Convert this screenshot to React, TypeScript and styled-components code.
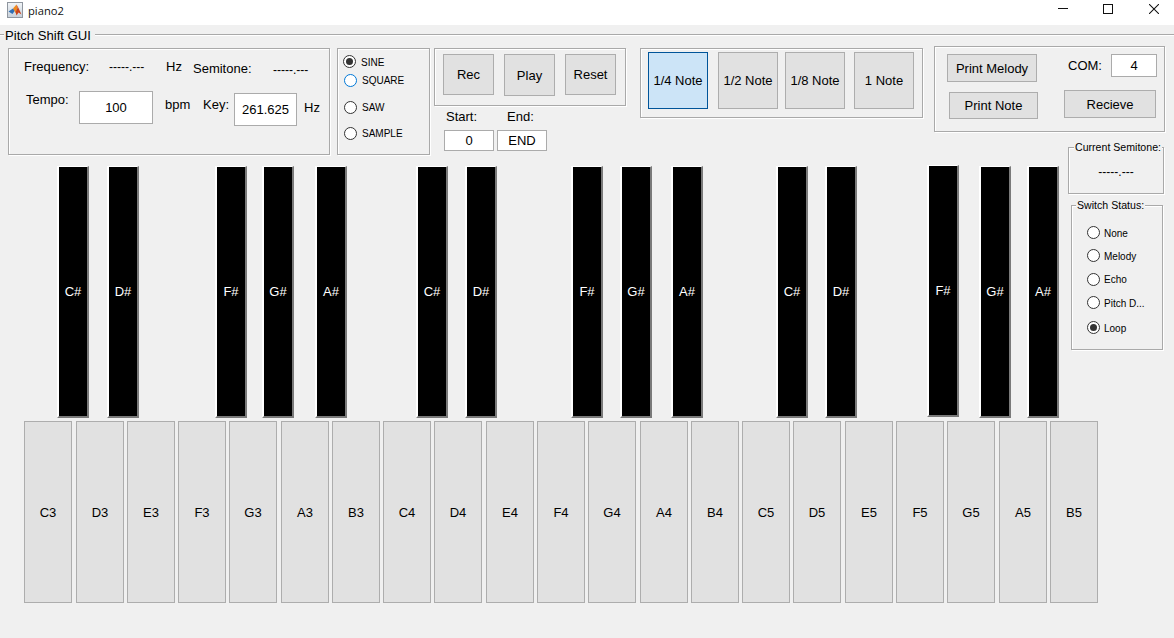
import React from 'react';
import styled, { createGlobalStyle } from 'styled-components';

const GlobalStyle = createGlobalStyle`
  html, body { margin: 0; padding: 0; background: #f0f0f0; }
  #root { width: 1174px; height: 638px; overflow: hidden; }
  * { box-sizing: border-box; }
`;

const Page = styled.div`
  width: 1174px;
  height: 638px;
  display: flex;
  flex-direction: column;
  background: #f0f0f0;
  color: #000;
  font-family: "Liberation Sans", Arial, sans-serif;
  font-size: 13px;
`;

const TitleBar = styled.header`
  height: 25px;
  flex: none;
  background: #fff;
  display: flex;
  align-items: center;
  padding: 0 15px 5px 7px;
`;

const AppName = styled.span`
  font-family: "Open Sans", "Noto Sans", sans-serif;
  font-size: 11.2px;
  margin-left: 5px;
  color: #111;
`;

const WindowControls = styled.div`
  margin: 0 0 2px auto;
  display: flex;
  align-items: center;
  gap: 35px;
  svg { display: block; }
  svg:last-child { margin-left: 1px; }
`;

const GroupTitle = styled.div`
  height: 21px;
  flex: none;
  display: flex;
  align-items: center;
  font-size: 13.1px;
`;

const TitleText = styled.span`
  padding: 0 4px 0 1px;
  line-height: 16px;
  margin-top: 1px;
`;

const TitleRule = styled.span<{ $w?: number }>`
  height: 2px;
  margin-top: -1px;
  background: linear-gradient(#a9a9a9 50%, #fff 50%);
  ${p => (p.$w ? `flex: 0 0 ${p.$w}px;` : 'flex: 1;')}
`;

const TopRow = styled.div`
  display: flex;
  align-items: flex-start;
  height: 109px;
  flex: none;
`;

const Panel = styled.section<{ $w: number; $h: number; $ml: number; $mt?: number }>`
  flex: none;
  width: ${p => p.$w}px;
  height: ${p => p.$h}px;
  margin-left: ${p => p.$ml}px;
  margin-top: ${p => p.$mt ?? 0}px;
  border: 1px solid #a9a9a9;
  box-shadow: 1px 1px 0 #fff, inset 1px 1px 0 #fff;
`;

const Row = styled.div<{ $pl?: number; $h?: number; $mt?: number }>`
  display: flex;
  align-items: flex-start;
  padding-left: ${p => p.$pl ?? 0}px;
  margin-top: ${p => p.$mt ?? 0}px;
  ${p => (p.$h ? `height: ${p.$h}px;` : '')}
`;

const Label = styled.span<{ $w?: number; $mt?: number; $ml?: number }>`
  flex: ${p => (p.$w ? `0 0 ${p.$w}px` : 'none')};
  margin-top: ${p => p.$mt ?? 0}px;
  margin-left: ${p => p.$ml ?? 0}px;
  line-height: 16px;
  white-space: nowrap;
`;

const Dashes = styled(Label)`
  font-size: 12px;
`;

const Field = styled.div<{ $w: number; $h: number; $mt?: number; $ml?: number; $mr?: number }>`
  flex: none;
  width: ${p => p.$w}px;
  height: ${p => p.$h}px;
  margin: ${p => p.$mt ?? 0}px ${p => p.$mr ?? 0}px 0 ${p => p.$ml ?? 0}px;
  background: #fff;
  border: 1px solid #ababab;
  display: flex;
  align-items: center;
  justify-content: center;
`;

const Btn = styled.button<{ $w: number; $h: number; $mt?: number; $ml?: number; $active?: boolean }>`
  flex: none;
  width: ${p => p.$w}px;
  height: ${p => p.$h}px;
  margin: ${p => p.$mt ?? 0}px 0 0 ${p => p.$ml ?? 0}px;
  padding: 0;
  font: inherit;
  color: #000;
  background: ${p => (p.$active ? '#cce4f7' : '#e1e1e1')};
  border: 1px solid ${p => (p.$active ? '#005499' : '#adadad')};
  display: block;
`;

const RadioColumn = styled.div`
  display: flex;
  flex-direction: column;
  align-items: flex-start;
`;

const RadioItem = styled.div<{ $mt: number; $ml: number; $gap: number }>`
  display: flex;
  align-items: center;
  height: 13px;
  margin: ${p => p.$mt}px 0 0 ${p => p.$ml}px;
  gap: ${p => p.$gap}px;
  font-size: 10px;
  white-space: nowrap;
`;

const RadioText = styled.span<{ $dy?: number }>`
  margin-top: ${p => p.$dy ?? 0}px;
`;

const RadioMark = styled.span<{ $on?: boolean; $focus?: boolean }>`
  flex: none;
  width: 13px;
  height: 13px;
  border-radius: 50%;
  background: #fff;
  border: 1px solid ${p => (p.$focus ? '#0078d7' : '#333')};
  display: flex;
  align-items: center;
  justify-content: center;
  &::after {
    content: '';
    width: 7px;
    height: 7px;
    border-radius: 50%;
    background: ${p => (p.$on ? '#333' : 'transparent')};
  }
`;

const Column = styled.div<{ $w?: number }>`
  display: flex;
  flex-direction: column;
  align-items: flex-start;
  ${p => (p.$w ? `flex: 0 0 ${p.$w}px; width: ${p.$w}px;` : '')}
`;

const RecColumn = styled.div`
  flex: none;
  width: 192px;
  margin: 2px 0 0 4px;
`;

const WorkArea = styled.div`
  display: flex;
  align-items: flex-start;
  flex: none;
`;

const Keyboard = styled.div`
  flex: 0 0 1068px;
  width: 1068px;
  margin-top: 10px;
`;

const BlackRow = styled.div`
  display: flex;
  align-items: flex-start;
  height: 253px;
`;

const BlackKey = styled.button<{ $gap: number; $raised?: boolean }>`
  flex: none;
  width: 32px;
  height: 252px;
  margin: ${p => (p.$raised ? 0 : 1)}px 0 0 ${p => p.$gap}px;
  padding: 0;
  background: #000;
  color: #fff;
  font: inherit;
  border-style: solid;
  border-width: 1px 2px 2px 2px;
  border-color: #fff #7a7a7a #7a7a7a #fff;
`;

const WhiteRow = styled.div`
  display: flex;
  margin-top: 3px;
`;

const WhiteKey = styled.button<{ $gap: number }>`
  flex: none;
  width: 48px;
  height: 182px;
  margin-left: ${p => p.$gap}px;
  padding: 0;
  font: inherit;
  color: #000;
  background: #e1e1e1;
  border: 1px solid #adadad;
`;

const Sidebar = styled.aside`
  flex: 0 0 96px;
  width: 96px;
  margin-top: -8px;
`;

const GroupBox = styled.div<{ $w: number; $h: number; $mt?: number; $ml?: number }>`
  position: relative;
  width: ${p => p.$w}px;
  height: ${p => p.$h}px;
  margin: ${p => p.$mt ?? 0}px 0 0 ${p => p.$ml ?? 0}px;
  border: 1px solid #a9a9a9;
  box-shadow: 1px 1px 0 #fff, inset 1px 1px 0 #fff;
`;

const GroupLegend = styled.span<{ $left: number }>`
  position: absolute;
  top: -7px;
  left: ${p => p.$left}px;
  padding: 0 1px;
  background: #f0f0f0;
  font-size: 10.6px;
  line-height: 13px;
  white-space: nowrap;
`;

const CenteredValue = styled.div`
  height: 100%;
  display: flex;
  align-items: center;
  justify-content: center;
  font-size: 12px;
  padding-top: 2px;
`;

const MatlabIcon = () => (
  <svg width="16" height="16" viewBox="0 0 16 16" style={{ display: 'block' }}>
    <defs>
      <linearGradient id="iconBack" x1="0" y1="0" x2="0" y2="1">
        <stop offset="0" stopColor="#f2f5f8" />
        <stop offset="1" stopColor="#c7d0da" />
      </linearGradient>
    </defs>
    <rect x="0.5" y="0.5" width="15" height="15" fill="url(#iconBack)" stroke="#8f969f" />
    <path d="M1.5 9.5 L6 6.5 L8 8.5 L5.5 12 Z" fill="#2f6fb5" />
    <path d="M6 6.5 L9.5 2.5 L10.5 6 L8.5 11 L7 8 Z" fill="#ef8a1f" />
    <path d="M9.5 2.5 L11.5 6 L14.5 12.5 L11.5 10.5 L9.5 13.5 L8.5 10 L10.5 6 Z" fill="#c9431c" />
  </svg>
);

const blackKeys: [string, number, boolean?][] = [
  ['C#', 57], ['D#', 107], ['F#', 215], ['G#', 262], ['A#', 315],
  ['C#', 416], ['D#', 465], ['F#', 571], ['G#', 620], ['A#', 671],
  ['C#', 776], ['D#', 825], ['F#', 927, true], ['G#', 979], ['A#', 1027],
];

const whiteKeys: [string, number][] = [
  ['C3', 24], ['D3', 76], ['E3', 127], ['F3', 178], ['G3', 229], ['A3', 281], ['B3', 332],
  ['C4', 383], ['D4', 434], ['E4', 486], ['F4', 537], ['G4', 588], ['A4', 640], ['B4', 691],
  ['C5', 742], ['D5', 793], ['E5', 845], ['F5', 896], ['G5', 947], ['A5', 999], ['B5', 1050],
];

export default function App() {
  return (
    <Page>
      <GlobalStyle />
      <TitleBar>
        <MatlabIcon />
        <AppName>piano2</AppName>
        <WindowControls>
          <svg width="10" height="10" viewBox="0 0 10 10"><path d="M0 4.5H10" stroke="#111" /></svg>
          <svg width="10" height="10" viewBox="0 0 10 10"><rect x="0.5" y="0.5" width="9" height="9" fill="none" stroke="#111" /></svg>
          <svg width="10" height="10" viewBox="0 0 10 10"><path d="M0 0L10 10M10 0L0 10" stroke="#111" strokeWidth="1.05" /></svg>
        </WindowControls>
      </TitleBar>

      <GroupTitle>
        <TitleRule $w={4} />
        <TitleText>Pitch Shift GUI</TitleText>
        <TitleRule />
      </GroupTitle>

      <TopRow>
        <Panel $w={322} $h={107} $ml={8} $mt={2}>
          <Row $pl={15} $h={42}>
            <Label $w={85} $mt={10}>Frequency:</Label>
            <Dashes $w={57} $mt={10}>-----.---</Dashes>
            <Label $w={27} $mt={10}>Hz</Label>
            <Label $w={80} $mt={12}>Semitone:</Label>
            <Dashes $mt={13}>-----.---</Dashes>
          </Row>
          <Row $pl={17}>
            <Label $w={53} $mt={1}>Tempo:</Label>
            <Field $w={74} $h={33} $mr={12}>100</Field>
            <Label $w={38} $mt={6}>bpm</Label>
            <Label $w={31} $mt={6}>Key:</Label>
            <Field $w={63} $h={33} $mt={2} $mr={7}>261.625</Field>
            <Label $mt={9}>Hz</Label>
          </Row>
        </Panel>

        <Panel $w={93} $h={107} $ml={7} $mt={2}>
          <RadioColumn>
            <RadioItem $mt={6} $ml={5} $gap={5}><RadioMark $on /><RadioText $dy={1}>SINE</RadioText></RadioItem>
            <RadioItem $mt={6} $ml={6} $gap={5}><RadioMark $focus /><RadioText>SQUARE</RadioText></RadioItem>
            <RadioItem $mt={14} $ml={6} $gap={5}><RadioMark /><RadioText>SAW</RadioText></RadioItem>
            <RadioItem $mt={13} $ml={6} $gap={5}><RadioMark /><RadioText>SAMPLE</RadioText></RadioItem>
          </RadioColumn>
        </Panel>

        <RecColumn>
          <Panel $w={192} $h={58} $ml={0}>
            <Row $pl={8}>
              <Btn $w={51} $h={41} $mt={5}>Rec</Btn>
              <Btn $w={51} $h={42} $mt={5} $ml={10}>Play</Btn>
              <Btn $w={51} $h={41} $mt={5} $ml={10}>Reset</Btn>
            </Row>
          </Panel>
          <Row $pl={12} $mt={3} $h={16}>
            <Label $w={61}>Start:</Label>
            <Label>End:</Label>
          </Row>
          <Row $pl={10} $mt={5}>
            <Field $w={50} $h={21}>0</Field>
            <Field $w={50} $h={21} $ml={3}>END</Field>
          </Row>
        </RecColumn>

        <Panel $w={283} $h={70} $ml={14} $mt={2}>
          <Row $pl={7}>
            <Btn $w={60} $h={57} $mt={3} $active>1/4 Note</Btn>
            <Btn $w={60} $h={57} $mt={3} $ml={10}>1/2 Note</Btn>
            <Btn $w={60} $h={57} $mt={3} $ml={7}>1/8 Note</Btn>
            <Btn $w={60} $h={57} $mt={3} $ml={9}>1 Note</Btn>
          </Row>
        </Panel>

        <Panel $w={231} $h={86} $ml={11}>
          <Row>
            <Column $w={129}>
              <Btn $w={90} $h={28} $mt={7} $ml={12}>Print Melody</Btn>
              <Btn $w={89} $h={27} $mt={10} $ml={14}>Print Note</Btn>
            </Column>
            <Column>
              <Row>
                <Label $w={43} $ml={4} $mt={11}>COM:</Label>
                <Field $w={46} $h={23} $mt={7}>4</Field>
              </Row>
              <Btn $w={92} $h={28} $mt={13}>Recieve</Btn>
            </Column>
          </Row>
        </Panel>
      </TopRow>

      <WorkArea>
        <Keyboard>
          <BlackRow>
            {blackKeys.map(([name, x, raised], i) => (
              <BlackKey
                key={i}
                $raised={raised}
                $gap={x - (i === 0 ? 0 : blackKeys[i - 1][1] + 32)}
              >
                {name}
              </BlackKey>
            ))}
          </BlackRow>
          <WhiteRow>
            {whiteKeys.map(([name, x], i) => (
              <WhiteKey key={name} $gap={x - (i === 0 ? 0 : whiteKeys[i - 1][1] + 48)}>
                {name}
              </WhiteKey>
            ))}
          </WhiteRow>
        </Keyboard>

        <Sidebar>
          <GroupBox $w={96} $h={47}>
            <GroupLegend $left={5}>Current Semitone:</GroupLegend>
            <CenteredValue>-----.---</CenteredValue>
          </GroupBox>
          <GroupBox $w={92} $h={145} $mt={11} $ml={3}>
            <GroupLegend $left={4}>Switch Status:</GroupLegend>
            <RadioColumn>
              <RadioItem $mt={20} $ml={15} $gap={4}><RadioMark /><RadioText $dy={1}>None</RadioText></RadioItem>
              <RadioItem $mt={10} $ml={15} $gap={4}><RadioMark /><RadioText $dy={1}>Melody</RadioText></RadioItem>
              <RadioItem $mt={11} $ml={15} $gap={4}><RadioMark /><RadioText>Echo</RadioText></RadioItem>
              <RadioItem $mt={10} $ml={15} $gap={4}><RadioMark /><RadioText $dy={1}>Pitch D...</RadioText></RadioItem>
              <RadioItem $mt={12} $ml={15} $gap={4}><RadioMark $on /><RadioText $dy={1}>Loop</RadioText></RadioItem>
            </RadioColumn>
          </GroupBox>
        </Sidebar>
      </WorkArea>
    </Page>
  );
}
